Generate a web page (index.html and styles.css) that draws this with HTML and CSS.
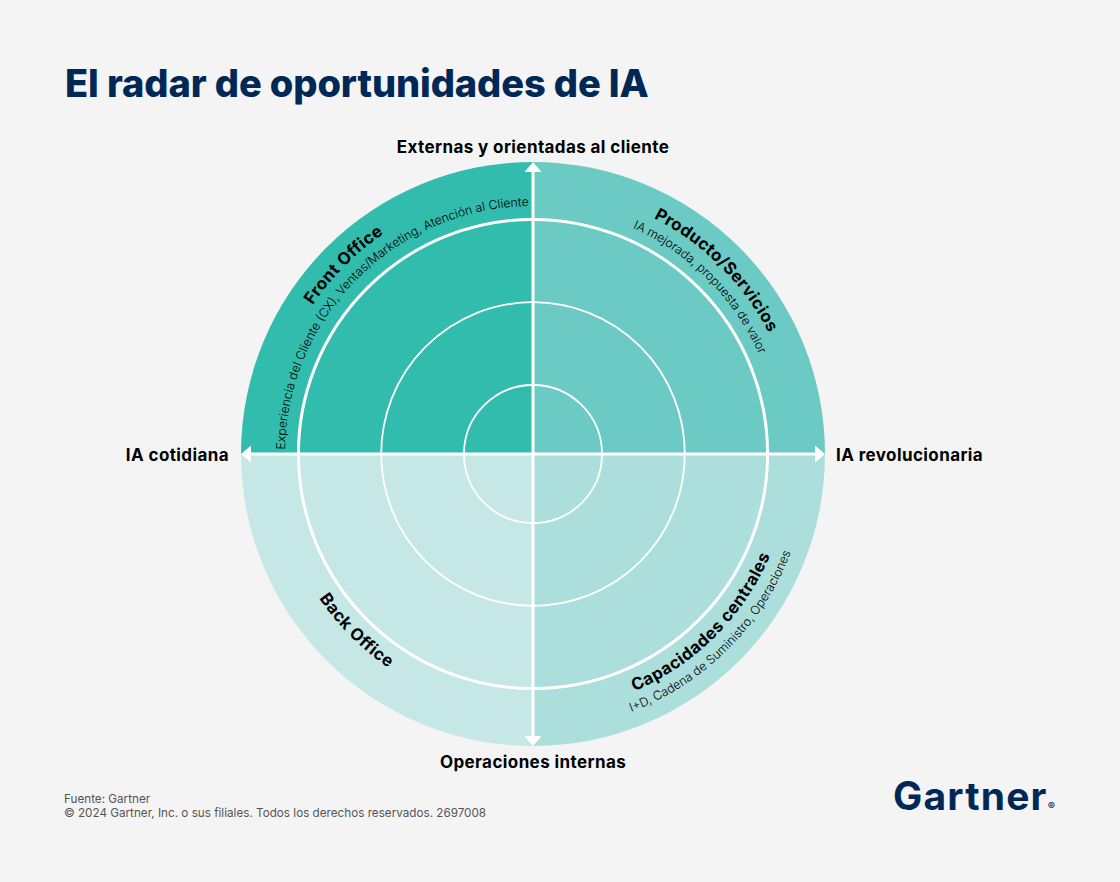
FILE: index.html
```html
<!DOCTYPE html>
<html lang="es">
<head>
<meta charset="utf-8">
<title>El radar de oportunidades de IA</title>
<link rel="stylesheet" href="styles.css">
</head>
<body>
<main class="page">
  <h1 class="title">El radar de oportunidades de IA</h1>
  <figure class="radar">
    <svg class="radar-svg" width="1120" height="660" viewBox="0 120 1120 660" xmlns="http://www.w3.org/2000/svg">
      <defs>
        <path id="arc-front" d="M 267 454 A 266 266 0 0 1 533 188"/>
        <path id="arc-front-sub" d="M 285 454 A 248 248 0 0 1 533 206"/>
        <path id="arc-prod" d="M 533 189 A 265 265 0 0 1 798 454"/>
        <path id="arc-prod-sub" d="M 533 207 A 247 247 0 0 1 780 454"/>
        <path id="arc-back" d="M 275 454 A 258 258 0 0 0 533 712"/>
        <path id="arc-core" d="M 533 712 A 258 258 0 0 0 791 454"/>
        <path id="arc-core-sub" d="M 533 730 A 276 276 0 0 0 809 454"/>
      </defs>
      <path class="q q-tl" d="M 533 454 L 241 454 A 292 292 0 0 1 533 162 Z"/>
      <path class="q q-tr" d="M 533 454 L 533 162 A 292 292 0 0 1 825 454 Z"/>
      <path class="q q-br" d="M 533 454 L 825 454 A 292 292 0 0 1 533 746 Z"/>
      <path class="q q-bl" d="M 533 454 L 533 746 A 292 292 0 0 1 241 454 Z"/>
      <circle class="ring ring-main" cx="533" cy="454" r="234.6"/>
      <circle class="ring" cx="533" cy="454" r="151.8"/>
      <circle class="ring" cx="533" cy="454" r="69"/>
      <line class="axis" x1="250" y1="454" x2="816" y2="454"/>
      <line class="axis" x1="533" y1="171" x2="533" y2="737"/>
      <polygon class="arrow" points="825,454 815,445.5 815,462.5"/>
      <polygon class="arrow" points="241,454 251,445.5 251,462.5"/>
      <polygon class="arrow" points="533,162 524.5,172 541.5,172"/>
      <polygon class="arrow" points="533,746 524.5,736 541.5,736"/>

      <text class="lbl-bold"><textPath href="#arc-front" startOffset="50%" text-anchor="middle">Front Office</textPath></text>
      <text class="lbl-sub"><textPath href="#arc-front-sub" startOffset="50%" text-anchor="middle">Experiencia del Cliente (CX), Ventas/Marketing, Atención al Cliente</textPath></text>
      <text class="lbl-bold"><textPath href="#arc-prod" startOffset="50%" text-anchor="middle">Producto/Servicios</textPath></text>
      <text class="lbl-sub"><textPath href="#arc-prod-sub" startOffset="50%" text-anchor="middle">IA mejorada, propuesta de valor</textPath></text>
      <text class="lbl-bold"><textPath href="#arc-back" startOffset="50%" text-anchor="middle">Back Office</textPath></text>
      <text class="lbl-bold"><textPath href="#arc-core" startOffset="50%" text-anchor="middle">Capacidades centrales</textPath></text>
      <text class="lbl-sub"><textPath href="#arc-core-sub" startOffset="50%" text-anchor="middle">I+D, Cadena de Suministro, Operaciones</textPath></text>

      <text class="axis-lbl" x="533" y="153" text-anchor="middle">Externas y orientadas al cliente</text>
      <text class="axis-lbl" x="229" y="461" text-anchor="end">IA cotidiana</text>
      <text class="axis-lbl" x="836" y="461" text-anchor="start">IA revolucionaria</text>
      <text class="axis-lbl" x="533" y="768" text-anchor="middle">Operaciones internas</text>
    </svg>
  </figure>
  <footer class="foot">
    <div class="source">
      <p class="source-line">Fuente: Gartner</p>
      <p class="source-line">© 2024 Gartner, Inc. o sus filiales. Todos los derechos reservados. 2697008</p>
    </div>
    <div class="logo">Gartner<span class="reg">®</span></div>
  </footer>
</main>
</body>
</html>
```

FILE: styles.css
```css
* { box-sizing: border-box; }
html, body { margin: 0; padding: 0; }
body {
  background: #f4f4f4;
  font-family: "Inter", "Liberation Sans", sans-serif;
  color: #000;
}
.page {
  width: 1120px;
  height: 882px;
  padding-top: 64px;
  overflow: hidden;
}
.title {
  margin: 0 0 18px 0;
  padding-left: 65px;
  font-size: 38px;
  line-height: 38px;
  font-weight: 800;
  letter-spacing: -0.1px;
  color: #002856;
}
.radar {
  margin: 0;
  height: 660px;
}
.radar-svg { display: block; }
.q-tl { fill: #31bcad; }
.q-tr { fill: #6ccac4; }
.q-br { fill: #acdedb; }
.q-bl { fill: #c5e7e5; }
.ring { fill: none; stroke: #fff; stroke-width: 1.8; }
.ring-main { stroke-width: 3; }
.axis { stroke: #fff; stroke-width: 3; }
.arrow { fill: #fff; }
.lbl-bold {
  font-family: "Inter", "Liberation Sans", sans-serif;
  font-weight: 700;
  font-size: 16.8px;
  letter-spacing: 0.4px;
  fill: #000;
}
.lbl-sub {
  font-family: "Inter", "Liberation Sans", sans-serif;
  font-weight: 300;
  font-size: 12.3px;
  fill: #000;
}
.axis-lbl {
  font-family: "Inter", "Liberation Sans", sans-serif;
  font-weight: 700;
  font-size: 17px;
  letter-spacing: 0.4px;
  fill: #000;
}
.foot {
  display: flex;
  justify-content: space-between;
  align-items: flex-start;
  padding: 0 65px 0 64px;
}
.source { padding-top: 12px; }
.source-line {
  margin: 0;
  font-size: 11.7px;
  line-height: 14px;
  color: #555;
}
.logo {
  margin-top: -4px;
  font-size: 39px;
  line-height: 39px;
  font-weight: 700;
  letter-spacing: 1.2px;
  color: #002856;
}
.reg {
  font-size: 11px;
  letter-spacing: 0;
  margin-left: 0;
}
```
